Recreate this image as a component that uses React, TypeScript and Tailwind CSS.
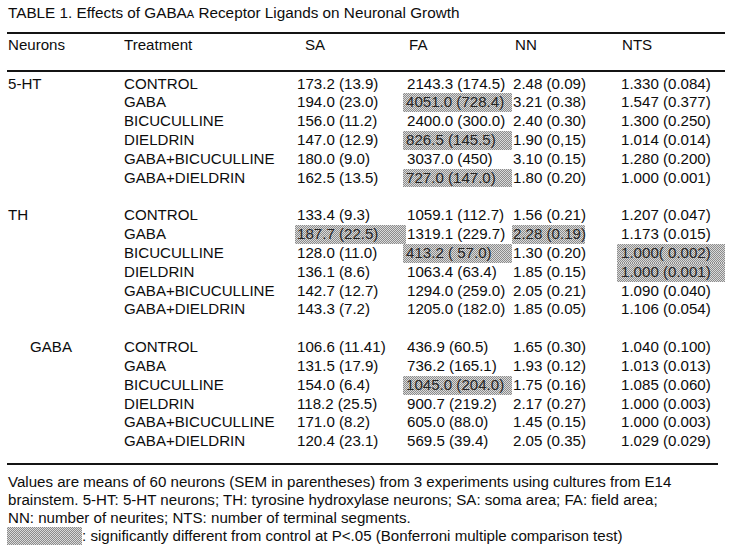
type Cell = { text: string; shade?: boolean };
type Row = { treatment: string; sa: Cell; fa: Cell; nn: Cell; nts: Cell };
type Group = { name: string; indent?: boolean; rows: Row[] };

const c = (text: string, shade = false): Cell => ({ text, shade });

const groups: Group[] = [
  {
    name: "5-HT",
    rows: [
      { treatment: "CONTROL", sa: c("173.2 (13.9)"), fa: c("2143.3 (174.5)"), nn: c("2.48 (0.09)"), nts: c("1.330 (0.084)") },
      { treatment: "GABA", sa: c("194.0 (23.0)"), fa: c("4051.0 (728.4)", true), nn: c("3.21 (0.38)"), nts: c("1.547 (0.377)") },
      { treatment: "BICUCULLINE", sa: c("156.0 (11.2)"), fa: c("2400.0 (300.0)"), nn: c("2.40 (0.30)"), nts: c("1.300 (0.250)") },
      { treatment: "DIELDRIN", sa: c("147.0 (12.9)"), fa: c("826.5 (145.5)", true), nn: c("1.90 (0,15)"), nts: c("1.014 (0.014)") },
      { treatment: "GABA+BICUCULLINE", sa: c("180.0 (9.0)"), fa: c("3037.0 (450)"), nn: c("3.10 (0.15)"), nts: c("1.280 (0.200)") },
      { treatment: "GABA+DIELDRIN", sa: c("162.5 (13.5)"), fa: c("727.0 (147.0)", true), nn: c("1.80 (0.20)"), nts: c("1.000 (0.001)") },
    ],
  },
  {
    name: "TH",
    rows: [
      { treatment: "CONTROL", sa: c("133.4 (9.3)"), fa: c("1059.1 (112.7)"), nn: c("1.56 (0.21)"), nts: c("1.207 (0.047)") },
      { treatment: "GABA", sa: c("187.7 (22.5)", true), fa: c("1319.1 (229.7)"), nn: c("2.28 (0.19)", true), nts: c("1.173 (0.015)") },
      { treatment: "BICUCULLINE", sa: c("128.0 (11.0)"), fa: c("413.2 ( 57.0)", true), nn: c("1.30 (0.20)"), nts: c("1.000( 0.002)", true) },
      { treatment: "DIELDRIN", sa: c("136.1 (8.6)"), fa: c("1063.4 (63.4)"), nn: c("1.85 (0.15)"), nts: c("1.000 (0.001)", true) },
      { treatment: "GABA+BICUCULLINE", sa: c("142.7 (12.7)"), fa: c("1294.0 (259.0)"), nn: c("2.05 (0.21)"), nts: c("1.090 (0.040)") },
      { treatment: "GABA+DIELDRIN", sa: c("143.3 (7.2)"), fa: c("1205.0 (182.0)"), nn: c("1.85 (0.05)"), nts: c("1.106 (0.054)") },
    ],
  },
  {
    name: "GABA",
    indent: true,
    rows: [
      { treatment: "CONTROL", sa: c("106.6 (11.41)"), fa: c("436.9 (60.5)"), nn: c("1.65 (0.30)"), nts: c("1.040 (0.100)") },
      { treatment: "GABA", sa: c("131.5 (17.9)"), fa: c("736.2 (165.1)"), nn: c("1.93 (0.12)"), nts: c("1.013 (0.013)") },
      { treatment: "BICUCULLINE", sa: c("154.0 (6.4)"), fa: c("1045.0 (204.0)", true), nn: c("1.75 (0.16)"), nts: c("1.085 (0.060)") },
      { treatment: "DIELDRIN", sa: c("118.2 (25.5)"), fa: c("900.7 (219.2)"), nn: c("2.17 (0.27)"), nts: c("1.000 (0.003)") },
      { treatment: "GABA+BICUCULLINE", sa: c("171.0 (8.2)"), fa: c("605.0 (88.0)"), nn: c("1.45 (0.15)"), nts: c("1.000 (0.003)") },
      { treatment: "GABA+DIELDRIN", sa: c("120.4 (23.1)"), fa: c("569.5 (39.4)"), nn: c("2.05 (0.35)"), nts: c("1.029 (0.029)") },
    ],
  },
];

// halftone-ish screen used for "significant" cells
const dots = "bg-[image:repeating-conic-gradient(#8c8c8c_0_25%,#dadada_0_50%)] bg-[length:2px_2px]";

const cols = "grid grid-cols-[116px_171px_109px_108px_105px_108px]";

function DataCell({ cell, pad, shadeW }: { cell: Cell; pad: string; shadeW: string }) {
  if (!cell.shade) {
    return <div className={`h-full whitespace-pre ${pad}`}>{cell.text}</div>;
  }
  return (
    <div className="h-full">
      <div className={`h-full whitespace-pre ${dots} ${shadeW} ${pad} text-[#262626]`}>{cell.text}</div>
    </div>
  );
}

export default function App() {
  return (
    <div className="w-[731px] h-[554px] bg-white text-[#0d0d0d] font-['Liberation_Sans',Arial,sans-serif] text-[15.1px] overflow-hidden">
      <div className="pl-2 pt-1 h-[18px] leading-[18px] text-[15.3px]">
        TABLE 1. Effects of GABA<span className="text-[11px]">A</span> Receptor Ligands on Neuronal Growth
      </div>

      <div className="ml-[7px] w-[718px] h-[2px] bg-[#141414] mt-[14px]" />
      <div className={`${cols} pl-2 h-[36px] pt-[2px] leading-[18px]`}>
        <div>Neurons</div>
        <div>Treatment</div>
        <div className="pl-[10px]">SA</div>
        <div className="pl-[5px]">FA</div>
        <div className="pl-[3px]">NN</div>
        <div className="pl-[5px]">NTS</div>
      </div>
      <div className="ml-[7px] w-[718px] h-[2px] bg-[#141414]" />

      <div className="pt-[2.5px] leading-[18.84px]">
        {groups.map((g, gi) => (
          <div key={g.name}>
            {gi > 0 && <div className="h-[18.84px]" />}
            {g.rows.map((r, ri) => (
              <div key={ri} className={`${cols} pl-2 h-[18.84px]`}>
                <div className={g.indent ? "pl-[22px]" : ""}>{ri === 0 ? g.name : ""}</div>
                <div>{r.treatment}</div>
                <DataCell cell={r.sa} pad="pl-[2px]" shadeW="w-[111px]" />
                <DataCell cell={r.fa} pad="pl-[3px]" shadeW="w-[109px] -ml-px" />
                <DataCell cell={r.nn} pad="pl-[1px]" shadeW="w-[73px]" />
                <DataCell cell={r.nts} pad="pl-[4px]" shadeW="w-[108px]" />
              </div>
            ))}
          </div>
        ))}
      </div>

      <div className="ml-[7px] w-[711px] h-[2px] bg-[#141414] mt-[11.5px]" />
      <div className="pl-2 pt-[8px] leading-[18px]">
        <div>Values are means of 60 neurons (SEM in parentheses) from 3 experiments using cultures from E14</div>
        <div>brainstem. 5-HT: 5-HT neurons; TH: tyrosine hydroxylase neurons; SA: soma area; FA: field area;</div>
        <div>NN: number of neurites; NTS: number of terminal segments.</div>
        <div className="flex -ml-px">
          <div className={`w-[75px] h-[18px] ${dots}`} />
          <div>: significantly different from control at P&lt;.05 (Bonferroni multiple comparison test)</div>
        </div>
      </div>
    </div>
  );
}
